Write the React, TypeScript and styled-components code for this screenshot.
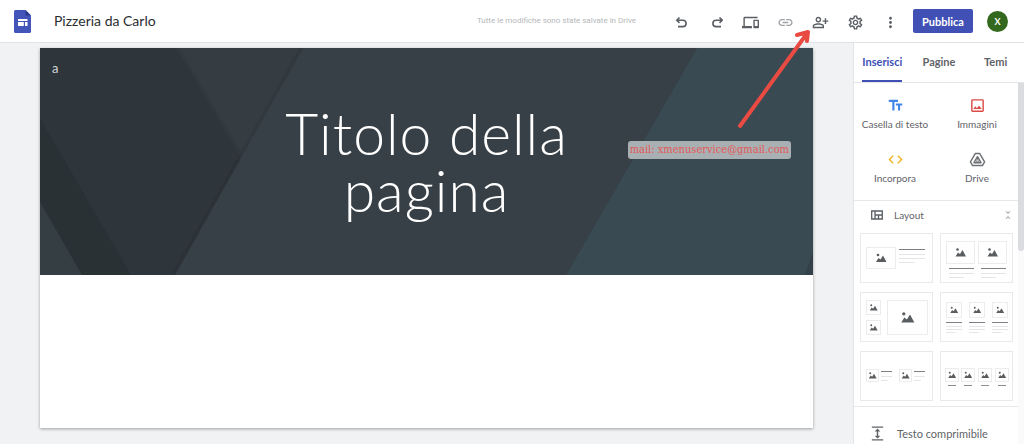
import React from "react";
import styled, { createGlobalStyle } from "styled-components";
import {
  MdCode,
  MdExpand,
  MdLink,
  MdMoreVert,
  MdOutlineDevices,
  MdOutlineImage,
  MdOutlinePersonAddAlt,
  MdOutlineSettings,
  MdTextFields,
  MdUnfoldLess,
} from "react-icons/md";

const GlobalStyle = createGlobalStyle`
  *, *::before, *::after { box-sizing: border-box; }
  body {
    margin: 0;
    background: #f0f2f4;
    color: #5f6368;
    font-family: Lato, "Open Sans", sans-serif;
  }
  button { font: inherit; color: inherit; }
`;

const Shell = styled.div`
  display: flex;
  flex-direction: column;
  height: 100vh;
  overflow: hidden;
`;

const Header = styled.header`
  display: flex;
  align-items: center;
  flex: none;
  height: 43px;
  padding: 0 16px 0 14px;
  background: #fff;
  border-bottom: 1px solid #dfe3e7;
`;

const Logo = styled.svg`
  flex: none;
  width: 17px;
  height: 23px;
  margin-right: 23px;
`;

const SiteName = styled.h1`
  margin: 0;
  flex: 1;
  font-size: 14px;
  font-weight: 400;
  line-height: 20px;
  color: #2b2d30;
  white-space: nowrap;
`;

const SaveStatus = styled.span`
  margin-right: 32px;
  font-family: Roboto, sans-serif;
  font-size: 8px;
  line-height: 12px;
  color: #b4b7ba;
  white-space: nowrap;
`;

const Tools = styled.div`
  display: flex;
  gap: 11px;
  margin-right: 11px;
`;

const IconButton = styled.button<{ $muted?: boolean }>`
  display: grid;
  place-items: center;
  width: 24px;
  height: 24px;
  margin-top: 3px;
  padding: 0;
  border: 0;
  background: none;
  color: ${(p) => (p.$muted ? "#a0a3a6" : "#5b5f64")};
  font-size: 17px;
`;

const PublishButton = styled.button`
  width: 60px;
  height: 24px;
  padding: 0;
  border: 0;
  border-radius: 2px;
  background: #4050b5;
  color: #fff;
  font-size: 11px;
  font-weight: 700;
`;

const Avatar = styled.button`
  width: 21px;
  height: 21px;
  margin-left: 14px;
  padding: 0;
  border: 0;
  border-radius: 50%;
  background: #33691e;
  color: #fff;
  font-size: 9px;
  font-weight: 700;
  line-height: 21px;
`;

const Workspace = styled.div`
  display: flex;
  flex: 1;
  min-height: 0;
`;

const Stage = styled.main`
  display: flex;
  flex: 1;
  min-width: 0;
  padding: 5px 40px 16px;
`;

const Sheet = styled.article`
  position: relative;
  flex: 1;
  min-width: 0;
  background: #fff;
  box-shadow: 0 1px 3px rgba(0, 0, 0, 0.35);
`;

const Banner = styled.section`
  position: relative;
  isolation: isolate;
  display: flex;
  flex-direction: column;
  height: 227px;
  background: #373f46;
  color: #fff;
`;

const BannerArt = styled.svg`
  position: absolute;
  inset: 0;
  z-index: -1;
  width: 100%;
  height: 100%;
`;

const SiteLabel = styled.span`
  padding: 12px 12px 0;
  font-size: 13px;
  line-height: 16px;
  color: #d3d6d8;
`;

const PageTitle = styled.h2`
  width: 320px;
  margin: 29px auto 0;
  font-size: 57px;
  font-weight: 300;
  line-height: 57px;
  letter-spacing: 1px;
  text-align: center;
`;

const MailNote = styled.p`
  position: absolute;
  top: 93px;
  right: 22px;
  margin: 0;
  padding: 0 2px;
  border-radius: 3px;
  background: #a9b0b3;
  color: #e45858;
  font-family: "DejaVu Serif Condensed", "Liberation Serif", serif;
  font-size: 11px;
  line-height: 18px;
  white-space: nowrap;
`;

const Arrow = styled.svg`
  position: absolute;
  top: -24px;
  right: 0;
  width: 80px;
  height: 110px;
  pointer-events: none;
`;

const Sidebar = styled.aside`
  display: flex;
  flex-direction: column;
  flex: none;
  width: 171px;
  background: #fff;
  border-left: 1px solid #e2e5e8;
`;

const Tabs = styled.div`
  display: grid;
  grid-template-columns: repeat(3, 1fr);
  justify-items: center;
  flex: none;
  height: 40px;
  border-bottom: 1px solid #e3e6e9;
`;

const Tab = styled.button<{ $active?: boolean }>`
  padding: 0;
  border: 0;
  border-bottom: 2px solid ${(p) => (p.$active ? "#4050b5" : "transparent")};
  background: none;
  color: ${(p) => (p.$active ? "#4050b5" : "#5f6368")};
  font-size: 11px;
  font-weight: 700;
`;

const SidebarBody = styled.div`
  display: flex;
  flex: 1;
  min-height: 0;
`;

const Sections = styled.div`
  flex: 1;
  min-width: 0;
  overflow: hidden;
`;

const ScrollTrack = styled.div`
  width: 6px;
  background: #fafafb;
`;

const ScrollThumb = styled.div`
  height: 168px;
  border-radius: 0 0 3px 3px;
  background: #dadce0;
`;

const InsertGrid = styled.div`
  display: grid;
  grid-template-columns: 1fr 1fr;
  align-content: start;
  row-gap: 18px;
  height: 118px;
  padding-top: 14px;
  border-bottom: 1px solid #e6e8ea;
`;

const InsertButton = styled.button`
  display: flex;
  flex-direction: column;
  align-items: center;
  gap: 3px;
  height: 36px;
  padding: 0;
  border: 0;
  background: none;
  font-size: 10px;
  line-height: 14px;
`;

const InsertIcon = styled.span<{ $color: string }>`
  display: flex;
  color: ${(p) => p.$color};
  font-size: 17px;
`;

const LayoutHeader = styled.button`
  display: flex;
  align-items: center;
  width: 100%;
  height: 29px;
  padding: 0 4px 2px 17px;
  border: 0;
  background: none;
  font-size: 10px;
`;

const SectionName = styled.span`
  flex: 1;
  margin-left: 11px;
  text-align: left;
`;

const CollapseIcon = styled(MdUnfoldLess)`
  color: #a8abae;
  font-size: 12px;
`;

const LayoutGrid = styled.div`
  display: grid;
  grid-template-columns: 1fr 1fr;
  gap: 9px 7px;
  padding: 3px 5px 5px 6px;
  border-bottom: 1px solid #e6e8ea;
`;

const LayoutCard = styled.button`
  display: block;
  height: 50px;
  padding: 0;
  border: 1px solid #e8e9eb;
  background: #fff;
`;

const Preview = styled.svg`
  display: block;
  width: 100%;
  height: 100%;
`;

const CollapsibleRow = styled.button`
  display: flex;
  align-items: center;
  width: 100%;
  height: 52px;
  padding: 0 0 0 15px;
  border: 0;
  background: none;
  font-size: 11px;
`;

type Box = [x: number, y: number, w: number, h: number];

/* Picture placeholder: thin frame around a dot and two peaks. */
function Picture({ box: [x, y, w, h] }: { box: Box }) {
  const s = Math.min(w, h) > 25 ? 1.25 : Math.min(w, h) > 18 ? 1 : 0.75;
  return (
    <g>
      <rect x={x + 0.5} y={y + 0.5} width={w - 1} height={h - 1} fill="none" stroke="#ececed" />
      <g transform={`translate(${x + w / 2} ${y + h / 2}) scale(${s})`} fill="#5a5d60">
        <path d="M-5 4L-2.500 0L-.5 1.500L2-2.500L5.500 4Z" />
        <circle cx="-3" cy="-3" r="1.300" />
      </g>
    </g>
  );
}

/* Text placeholder: a dark heading rule and pale body rules. */
function Lines({ x, y, w, rows, pitch = 4 }: { x: number; y: number; w: number; rows: number; pitch?: number }) {
  return (
    <g>
      <rect x={x} y={y} width={w} height="1" fill="#7d8084" />
      {Array.from({ length: rows }, (_, i) => (
        <rect
          key={i}
          x={x}
          y={y + 1 + pitch * (i + 1)}
          width={i === rows - 1 ? w * 0.6 : w}
          height="1"
          fill="#e4e5e7"
        />
      ))}
    </g>
  );
}

const layouts: { name: string; art: React.ReactNode }[] = [
  {
    name: "Immagine e testo",
    art: (
      <>
        <Picture box={[5, 13, 30, 22]} />
        <Lines x={38} y={15} w={26} rows={3} />
      </>
    ),
  },
  {
    name: "Due immagini con testo",
    art: (
      <>
        <Picture box={[5, 7, 29, 23]} />
        <Picture box={[37, 7, 29, 23]} />
        <Lines x={8} y={34} w={25} rows={2} />
        <Lines x={40} y={34} w={25} rows={2} />
      </>
    ),
  },
  {
    name: "Collage di tre immagini",
    art: (
      <>
        <Picture box={[5, 7, 15, 15]} />
        <Picture box={[5, 27, 15, 15]} />
        <Picture box={[26, 7, 41, 35]} />
      </>
    ),
  },
  {
    name: "Tre colonne",
    art: [5, 28, 51].map((x) => (
      <g key={x}>
        <Picture box={[x, 9, 16, 16]} />
        <Lines x={x} y={29} w={16} rows={3} pitch={3} />
      </g>
    )),
  },
  {
    name: "Due immagini affiancate",
    art: [5, 38].map((x) => (
      <g key={x}>
        <Picture box={[x, 17, 13, 13]} />
        <Lines x={x + 15} y={19} w={11} rows={2} />
      </g>
    )),
  },
  {
    name: "Quattro colonne",
    art: [4, 20, 37, 54].map((x) => (
      <g key={x}>
        <Picture box={[x, 16, 14, 14]} />
        <rect x={x + 3} y="33" width="8" height="1" fill="#8b8e91" />
      </g>
    )),
  },
];

function UndoIcon({ flip }: { flip?: boolean }) {
  return (
    <svg width="16" height="14" viewBox="0 0 16 14" fill="none" stroke="currentColor" strokeWidth="1.600">
      <g transform={flip ? "translate(18 0) scale(-1 1)" : "translate(2 0)"}>
        <path d="M5.500 1.500L2.800 4.200L5.500 6.900M2.800 4.200H8.800C13.200 4.200 13.200 10.600 8.800 10.600H4" />
      </g>
    </svg>
  );
}

function DriveIcon() {
  return (
    <svg width="17" height="17" viewBox="0 0 24 24" fill="none" stroke="currentColor" strokeWidth="2" strokeLinejoin="round">
      <path d="M9 3.500H15L22 15.500L19 20.500H5L2 15.500Z" />
      <path d="M12 8L17 16.500H7Z" />
      <path d="M12 11.500L14 15H10Z" strokeWidth="1" />
    </svg>
  );
}

function LayoutIcon() {
  return (
    <svg width="12" height="10" viewBox="0 0 12 10" fill="none" stroke="#5b5f64" strokeWidth="1.300">
      <path d="M.7 1H11.300V9H.7ZM4 1V9M4 5H11.300M7.500 5V9" />
    </svg>
  );
}

export default function App() {
  return (
    <Shell>
      <GlobalStyle />
      <Header>
        <Logo viewBox="0 0 17 23" aria-hidden="true">
          <path d="M1.500 0H11.500L17 5.500V21.500Q17 23 15.500 23H1.500Q0 23 0 21.500V1.500Q0 0 1.500 0Z" fill="#4355b8" />
          <path d="M11.500 0L17 5.500H11.500Z" fill="#2c3a8e" />
          <path d="M4 9H13.500V11H4ZM4 12H9.800V16H4ZM11 12H13.500V16H11Z" fill="#fff" />
        </Logo>
        <SiteName>Pizzeria da Carlo</SiteName>
        <SaveStatus>Tutte le modifiche sono state salvate in Drive</SaveStatus>
        <Tools>
          <IconButton aria-label="Annulla"><UndoIcon /></IconButton>
          <IconButton aria-label="Ripeti"><UndoIcon flip /></IconButton>
          <IconButton aria-label="Anteprima"><MdOutlineDevices /></IconButton>
          <IconButton aria-label="Copia link" $muted><MdLink /></IconButton>
          <IconButton aria-label="Condividi"><MdOutlinePersonAddAlt /></IconButton>
          <IconButton aria-label="Impostazioni"><MdOutlineSettings /></IconButton>
          <IconButton aria-label="Altro"><MdMoreVert /></IconButton>
        </Tools>
        <PublishButton>Pubblica</PublishButton>
        <Avatar aria-label="Account">X</Avatar>
      </Header>
      <Workspace>
        <Stage>
          <Sheet>
            <Banner>
              <BannerArt viewBox="0 0 773 227" preserveAspectRatio="none" aria-hidden="true">
                <defs>
                  <filter id="edge" x="-10%" y="-10%" width="120%" height="120%">
                    <feDropShadow dx="0" dy="0" stdDeviation="2" floodColor="#1c2225" floodOpacity="0.5" />
                  </filter>
                </defs>
                <path d="M136 0H263L200 111Z" fill="#353d43" />
                <path d="M-9-10H130L201 111L135 227V240H-9Z" fill="#2d353b" filter="url(#edge)" />
                <path d="M0 70L91 227H0Z" fill="#2a3134" />
                <path d="M0 154L42 227H0Z" fill="#343e43" />
                <path d="M263 0L135 227H526L657 0Z" fill="#373f46" filter="url(#edge)" />
                <path d="M657 0H773V227H526Z" fill="#394a52" />
                <path d="M773 203V227H765Z" fill="#344049" />
              </BannerArt>
              <SiteLabel>a</SiteLabel>
              <PageTitle>Titolo della pagina</PageTitle>
              <MailNote>mail: xmenuservice@gmail.com</MailNote>
            </Banner>
            <Arrow viewBox="0 0 80 110" fill="none" stroke="#e94b43" strokeWidth="4" strokeLinecap="round" strokeLinejoin="round" aria-hidden="true">
              <path d="M7 102L75 8M64 11L75 8L74 17" />
            </Arrow>
          </Sheet>
        </Stage>
        <Sidebar>
          <Tabs role="tablist">
            <Tab role="tab" aria-selected="true" $active>Inserisci</Tab>
            <Tab role="tab" aria-selected="false">Pagine</Tab>
            <Tab role="tab" aria-selected="false">Temi</Tab>
          </Tabs>
          <SidebarBody>
            <Sections>
              <InsertGrid>
                <InsertButton><InsertIcon $color="#4285e8"><MdTextFields /></InsertIcon>Casella di testo</InsertButton>
                <InsertButton><InsertIcon $color="#dc4b45"><MdOutlineImage /></InsertIcon>Immagini</InsertButton>
                <InsertButton><InsertIcon $color="#efb521"><MdCode /></InsertIcon>Incorpora</InsertButton>
                <InsertButton><InsertIcon $color="#6d7074"><DriveIcon /></InsertIcon>Drive</InsertButton>
              </InsertGrid>
              <LayoutHeader aria-expanded="true">
                <LayoutIcon />
                <SectionName>Layout</SectionName>
                <CollapseIcon />
              </LayoutHeader>
              <LayoutGrid>
                {layouts.map((l) => (
                  <LayoutCard key={l.name} aria-label={l.name}>
                    <Preview viewBox="0 0 71 48" aria-hidden="true">{l.art}</Preview>
                  </LayoutCard>
                ))}
              </LayoutGrid>
              <CollapsibleRow>
                <MdExpand size={17} />
                <SectionName>Testo comprimibile</SectionName>
              </CollapsibleRow>
            </Sections>
            <ScrollTrack><ScrollThumb /></ScrollTrack>
          </SidebarBody>
        </Sidebar>
      </Workspace>
    </Shell>
  );
}
